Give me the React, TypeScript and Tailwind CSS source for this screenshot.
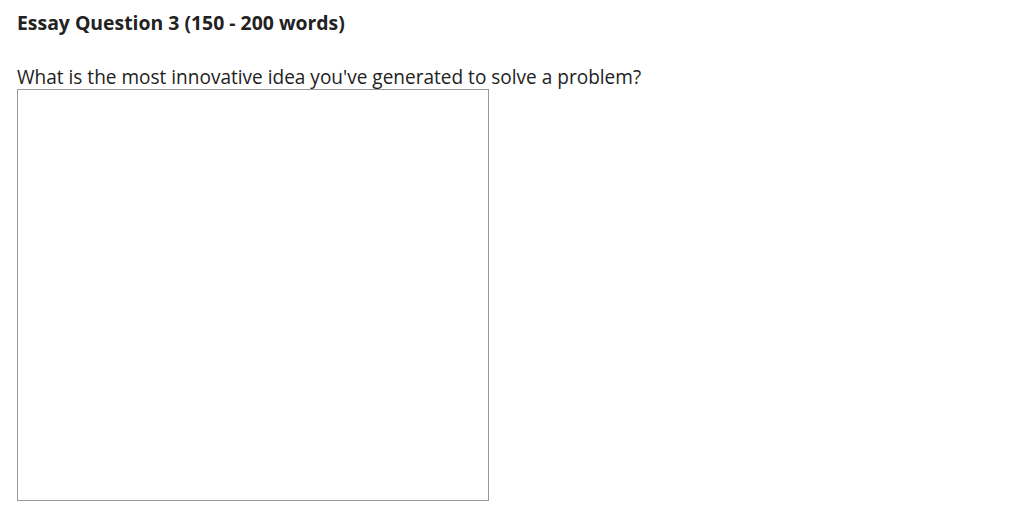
export default function App() {
  return (
    <div className="min-h-[524px] bg-white pl-[17px] pt-[10px] text-[#222]" style={{ fontFamily: '"Segoe UI", "Open Sans", sans-serif' }}>
      <h3 className="m-0 text-[19.4px] font-bold leading-[26px]">Essay Question 3 (150 - 200 words)</h3>
      <div className="mt-[29px] text-[19.05px] leading-[24px]">What is the most innovative idea you've generated to solve a problem?</div>
      <textarea className="block h-[412px] w-[472px] resize-none border border-[#999] bg-white" aria-label="answer" />
    </div>
  );
}
